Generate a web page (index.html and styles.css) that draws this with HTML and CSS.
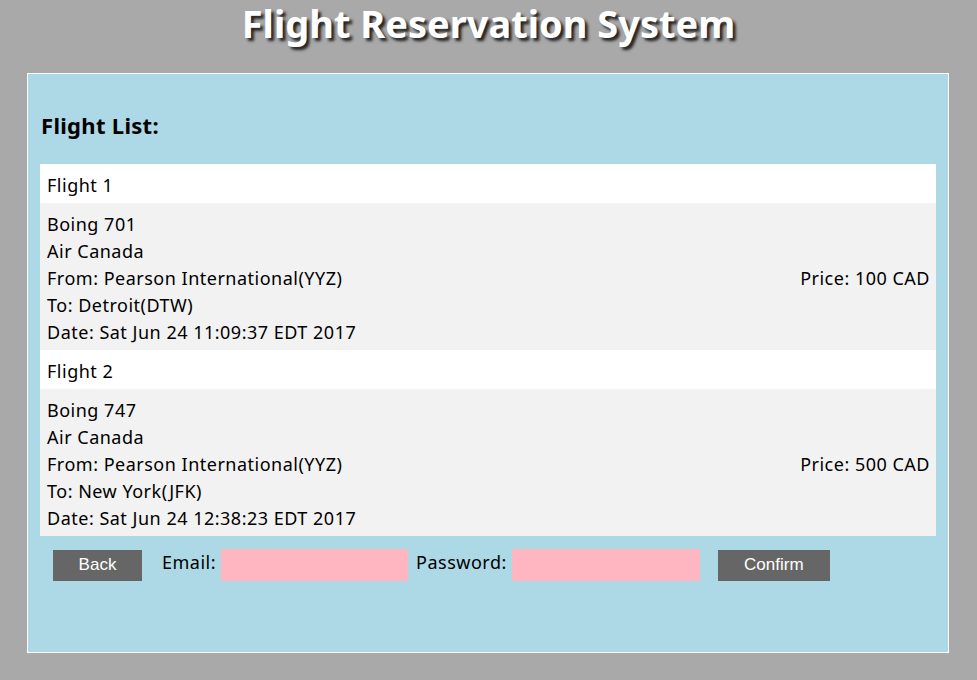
FILE: index.html
```html
<!DOCTYPE html>
<html>
<head>
<meta charset="utf-8">
<link rel="stylesheet" href="styles.css">
</head>
<body>
<h1 class="title">Flight Reservation System</h1>
<div class="panel">
  <h2 class="list-title">Flight List:</h2>
  <div class="list">
    <div class="flight-head">Flight 1</div>
    <div class="flight-body">
      <div class="info">
        <div>Boing 701</div>
        <div>Air Canada</div>
        <div>From: Pearson International(YYZ)</div>
        <div>To: Detroit(DTW)</div>
        <div>Date: Sat Jun 24 11:09:37 EDT 2017</div>
      </div>
      <div class="price">Price: 100 CAD</div>
    </div>
    <div class="flight-head">Flight 2</div>
    <div class="flight-body">
      <div class="info">
        <div>Boing 747</div>
        <div>Air Canada</div>
        <div>From: Pearson International(YYZ)</div>
        <div>To: New York(JFK)</div>
        <div>Date: Sat Jun 24 12:38:23 EDT 2017</div>
      </div>
      <div class="price">Price: 500 CAD</div>
    </div>
  </div>
  <div class="form-row">
    <button class="btn btn-back">Back</button>
    <label class="lbl lbl-email">Email:</label>
    <input class="field field-email" type="text">
    <label class="lbl lbl-pass">Password:</label>
    <input class="field field-pass" type="password">
    <button class="btn btn-confirm">Confirm</button>
  </div>
</div>
</body>
</html>
```

FILE: styles.css
```css
html, body {
  margin: 0;
  padding: 0;
}
body {
  background: #a9a9a9;
  font-family: "Noto Sans", "Open Sans", sans-serif;
  color: #000;
  height: 680px;
  overflow: hidden;
}
.title {
  margin: 0;
  height: 73px;
  text-align: center;
  font-size: 38px;
  line-height: 46px;
  font-weight: bold;
  color: #fff;
  text-shadow: 3px 3px 3px #222;
}
.panel {
  margin: 0 28px 0 27px;
  height: 578px;
  background: #add8e6;
  border: 1px solid #fff;
  padding: 0 12px 0 12px;
}
.list-title {
  margin: 0;
  padding-top: 36px;
  height: 53px;
  font-size: 22px;
  line-height: 30px;
  font-weight: bold;
  padding-left: 1px;
  letter-spacing: 0.3px;
}
.list {
  margin-top: 1px;
  letter-spacing: 0.5px;
}
.flight-head {
  background: #fff;
  height: 39px;
  line-height: 42px;
  padding-left: 7px;
  font-size: 18px;
}
.flight-body {
  background: #f2f2f2;
  display: flex;
  align-items: center;
  justify-content: space-between;
  padding: 8px 6px 4px 7px;
  font-size: 18px;
  line-height: 27px;
}
.form-row {
  display: flex;
  align-items: center;
  padding: 13px 0 0 13px;
  font-size: 18px;
  letter-spacing: 0.5px;
}
.btn {
  background: #666;
  color: #fff;
  border: none;
  font-family: "Liberation Sans", Arial, sans-serif;
  font-size: 17px;
  letter-spacing: 0;
  height: 31px;
  padding: 0;
  margin: 0;
}
.btn-back { width: 89px; }
.btn-confirm { width: 112px; margin-left: 18px; }
.lbl { line-height: 24px; margin-bottom: 6px; }
.lbl-email { margin-left: 20px; margin-right: 5px; }
.lbl-pass { margin-left: 8px; margin-right: 5px; }
.field {
  background: #ffb6c1;
  border: none;
  height: 32px;
  padding: 0;
  margin: 0;
  outline: none;
}
.field-email { width: 187px; }
.field-pass { width: 188px; }
```
